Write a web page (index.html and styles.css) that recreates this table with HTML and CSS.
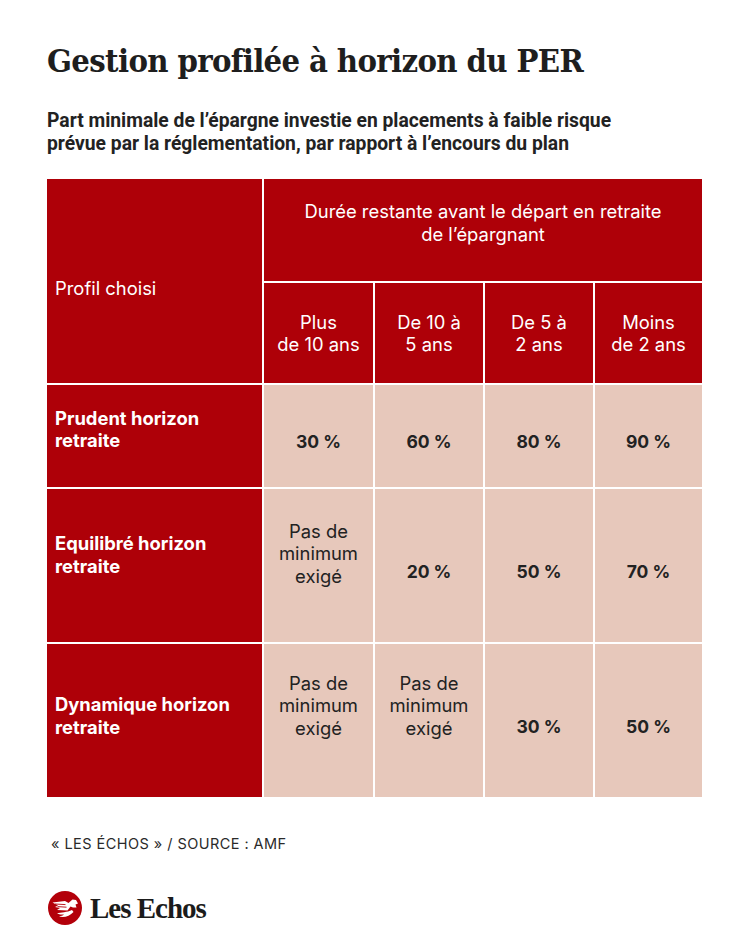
FILE: index.html
```html
<!DOCTYPE html>
<html lang="fr">
<head>
<meta charset="utf-8">
<link rel="stylesheet" href="styles.css">
</head>
<body>
<main class="page">
  <h1 class="title">Gestion profilée à horizon du PER</h1>
  <p class="subtitle">Part minimale de l’épargne investie en placements à faible risque<br>prévue par la réglementation, par rapport à l’encours du plan</p>

  <div class="table">
    <div class="cell head profil">Profil choisi</div>
    <div class="cell head duree">Durée restante avant le départ en retraite<br>de l’épargnant</div>
    <div class="cell head sub">Plus<br>de 10 ans</div>
    <div class="cell head sub">De 10 à<br>5 ans</div>
    <div class="cell head sub">De 5 à<br>2 ans</div>
    <div class="cell head sub">Moins<br>de 2 ans</div>

    <div class="cell label">Prudent horizon<br>retraite</div>
    <div class="cell val num">30 %</div>
    <div class="cell val num">60 %</div>
    <div class="cell val num">80 %</div>
    <div class="cell val num">90 %</div>

    <div class="cell label lift">Equilibré horizon<br>retraite</div>
    <div class="cell val multi">Pas de<br>minimum<br>exigé</div>
    <div class="cell val num">20 %</div>
    <div class="cell val num">50 %</div>
    <div class="cell val num">70 %</div>

    <div class="cell label drop">Dynamique horizon<br>retraite</div>
    <div class="cell val multi low">Pas de<br>minimum<br>exigé</div>
    <div class="cell val multi low">Pas de<br>minimum<br>exigé</div>
    <div class="cell val num">30 %</div>
    <div class="cell val num">50 %</div>
  </div>

  <p class="source">« LES ÉCHOS » / SOURCE : AMF</p>

  <div class="logo">
    <svg class="logo-mark" viewBox="0 0 34 34" width="34" height="34" aria-hidden="true">
      <circle cx="17" cy="17" r="17" fill="#b3000a"/>
      <path d="M4.5 11.5 L17 10 L20.5 12 L24.5 8.5 L28 9 L30 12.5 L27.5 13.5 L28.5 16.5 L25 16.5 L22.5 15.5 L19.5 19.5 L9 19 L12 17 L7 16 L10 14.5 Z" fill="#fff"/>
      <path d="M7 13 L17.5 13.6 M9.5 15.6 L18.5 16.2" stroke="#b3000a" stroke-width="0.9" fill="none"/>
      <path d="M9 22.5 C13 21 19 21.5 24 19 L25.5 21 C22 25 16 27 11 25.5 C13 25 15 24.5 16 23.5 C13.5 23.5 11 23.5 9 22.5 Z" fill="#fff"/>
    </svg>
    <span class="logo-text">Les Echos</span>
  </div>
</main>
</body>
</html>
```

FILE: styles.css
```css
* { box-sizing: border-box; }
html, body { margin: 0; padding: 0; background: #fff; }
.page {
  width: 750px;
  padding: 40px 48px 0 47px;
  font-family: Inter, Roboto, "Liberation Sans", sans-serif;
  color: #222;
}
.title {
  margin: 0;
  font-family: "DejaVu Serif", "Liberation Serif", serif;
  font-stretch: condensed;
  font-weight: 700;
  font-size: 32.5px;
  line-height: 42px;
  letter-spacing: -0.65px;
  color: #1e1e1e;
}
.subtitle {
  margin: 27px 0 0 0;
  font-family: Roboto, "Liberation Sans", sans-serif;
  font-weight: 700;
  font-size: 19.3px;
  line-height: 23px;
  color: #222;
}
.table {
  margin-top: 24px;
  display: grid;
  grid-template-columns: 215px 109px 108px 108px 107px;
  grid-template-rows: 102px 100px 102px 153px 153px;
  gap: 2px;
  width: 655px;
  background: #fff;
}
.cell {
  display: flex;
  align-items: center;
  font-size: 18.4px;
  line-height: 22.5px;
}
.head {
  background: #ae0008;
  color: #fff;
  justify-content: center;
  text-align: center;
}
.profil {
  grid-row: 1 / span 2;
  justify-content: flex-start;
  text-align: left;
  padding: 14px 8px 0 8px;
}
.duree {
  grid-column: 2 / span 4;
  align-items: flex-start;
  padding-top: 21px;
}
.label {
  background: #ae0008;
  color: #fff;
  font-weight: 700;
  padding: 0 8px 14px 8px;
}
.label.lift { padding-bottom: 22px; }
.label.drop { padding-bottom: 10px; }
.val {
  background: #e7c8bb;
  color: #222;
  justify-content: center;
  text-align: center;
}
.num {
  font-weight: 700;
  font-size: 17.5px;
  padding-top: 13px;
}
.multi { padding-bottom: 24px; }
.multi.low { padding-bottom: 30px; }
.source {
  margin: 38px 0 0 4px;
  font-size: 14.5px;
  line-height: 18px;
  letter-spacing: 0.45px;
  color: #2a2a2a;
}
.logo {
  margin-top: 38px;
  display: flex;
  align-items: center;
  gap: 8px;
}
.logo-mark { display: block; margin-left: 1px; }
.logo-text {
  font-family: "Liberation Serif", "DejaVu Serif", serif;
  font-weight: 700;
  font-size: 29px;
  letter-spacing: -1px;
  color: #1b1b1b;
}
```
